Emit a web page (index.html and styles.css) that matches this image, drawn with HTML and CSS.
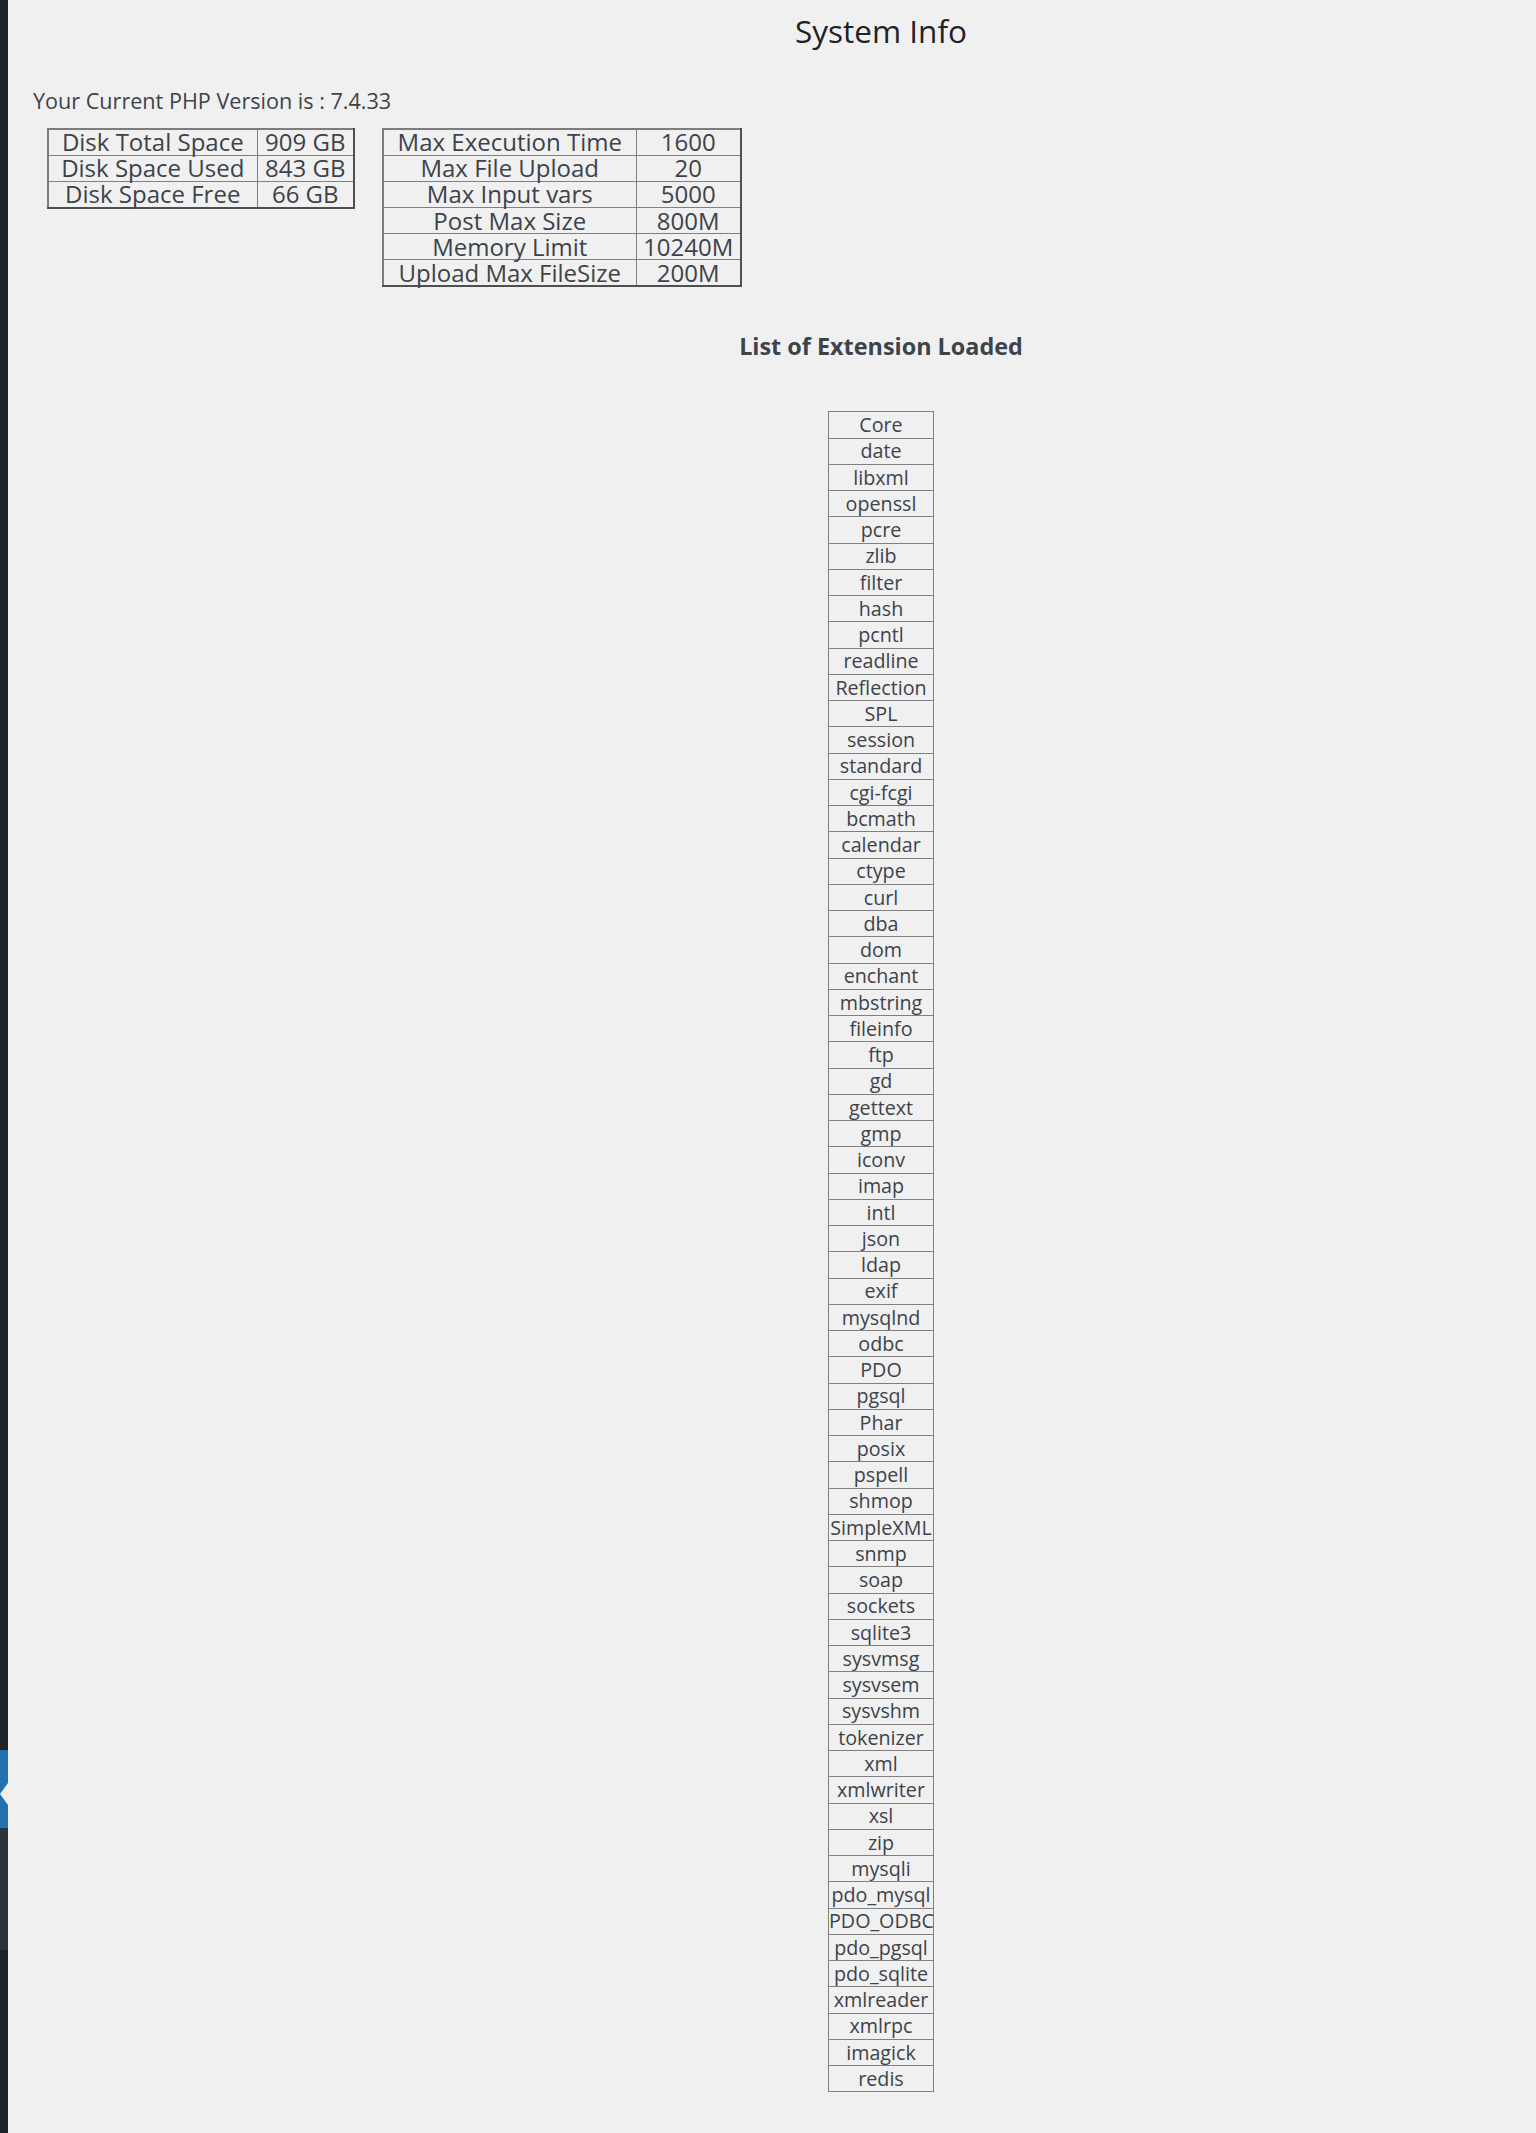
FILE: index.html
```html
<!DOCTYPE html>
<html lang="en">
<head>
<meta charset="utf-8">
<title>System Info</title>
<link rel="stylesheet" href="styles.css">
</head>
<body>
<div class="layout">
  <aside class="adminmenu">
    <div class="seg seg-top"></div>
    <div class="seg seg-current"><span class="current-arrow"></span></div>
    <div class="seg seg-sub"></div>
    <div class="seg seg-rest"></div>
  </aside>
  <main class="content">
    <h1 class="page-title centered">System Info</h1>
    <p class="php-version">Your Current PHP Version is : 7.4.33</p>
    <div class="info-tables">
      <table class="info-table disk-table">
        <colgroup><col class="c-name"><col></colgroup>
        <tr><td>Disk Total Space</td><td>909 GB</td></tr>
        <tr><td>Disk Space Used</td><td>843 GB</td></tr>
        <tr><td>Disk Space Free</td><td>66 GB</td></tr>
      </table>
      <table class="info-table php-table">
        <colgroup><col class="c-name"><col></colgroup>
        <tr><td>Max Execution Time</td><td>1600</td></tr>
        <tr><td>Max File Upload</td><td>20</td></tr>
        <tr><td>Max Input vars</td><td>5000</td></tr>
        <tr><td>Post Max Size</td><td>800M</td></tr>
        <tr><td>Memory Limit</td><td>10240M</td></tr>
        <tr><td>Upload Max FileSize</td><td>200M</td></tr>
      </table>
    </div>
    <h3 class="ext-title centered">List of Extension Loaded</h3>
    <div class="centered ext-wrap">
      <table class="ext-table">
        <tr><td>Core</td></tr>
        <tr><td>date</td></tr>
        <tr><td>libxml</td></tr>
        <tr><td>openssl</td></tr>
        <tr><td>pcre</td></tr>
        <tr><td>zlib</td></tr>
        <tr><td>filter</td></tr>
        <tr><td>hash</td></tr>
        <tr><td>pcntl</td></tr>
        <tr><td>readline</td></tr>
        <tr><td>Reflection</td></tr>
        <tr><td>SPL</td></tr>
        <tr><td>session</td></tr>
        <tr><td>standard</td></tr>
        <tr><td>cgi-fcgi</td></tr>
        <tr><td>bcmath</td></tr>
        <tr><td>calendar</td></tr>
        <tr><td>ctype</td></tr>
        <tr><td>curl</td></tr>
        <tr><td>dba</td></tr>
        <tr><td>dom</td></tr>
        <tr><td>enchant</td></tr>
        <tr><td>mbstring</td></tr>
        <tr><td>fileinfo</td></tr>
        <tr><td>ftp</td></tr>
        <tr><td>gd</td></tr>
        <tr><td>gettext</td></tr>
        <tr><td>gmp</td></tr>
        <tr><td>iconv</td></tr>
        <tr><td>imap</td></tr>
        <tr><td>intl</td></tr>
        <tr><td>json</td></tr>
        <tr><td>ldap</td></tr>
        <tr><td>exif</td></tr>
        <tr><td>mysqlnd</td></tr>
        <tr><td>odbc</td></tr>
        <tr><td>PDO</td></tr>
        <tr><td>pgsql</td></tr>
        <tr><td>Phar</td></tr>
        <tr><td>posix</td></tr>
        <tr><td>pspell</td></tr>
        <tr><td>shmop</td></tr>
        <tr><td>SimpleXML</td></tr>
        <tr><td>snmp</td></tr>
        <tr><td>soap</td></tr>
        <tr><td>sockets</td></tr>
        <tr><td>sqlite3</td></tr>
        <tr><td>sysvmsg</td></tr>
        <tr><td>sysvsem</td></tr>
        <tr><td>sysvshm</td></tr>
        <tr><td>tokenizer</td></tr>
        <tr><td>xml</td></tr>
        <tr><td>xmlwriter</td></tr>
        <tr><td>xsl</td></tr>
        <tr><td>zip</td></tr>
        <tr><td>mysqli</td></tr>
        <tr><td>pdo_mysql</td></tr>
        <tr><td>PDO_ODBC</td></tr>
        <tr><td>pdo_pgsql</td></tr>
        <tr><td>pdo_sqlite</td></tr>
        <tr><td>xmlreader</td></tr>
        <tr><td>xmlrpc</td></tr>
        <tr><td>imagick</td></tr>
        <tr><td>redis</td></tr>
      </table>
    </div>
  </main>
</div>
</body>
</html>
```

FILE: styles.css
```css
html, body {
  margin: 0;
  padding: 0;
  background: #f0f0f1;
}

body {
  font-family: "Open Sans", "Noto Sans", sans-serif;
  color: #3c434a;
}

.layout {
  display: flex;
  min-height: 2133px;
}

/* collapsed admin menu strip */
.adminmenu {
  width: 8px;
  flex: 0 0 8px;
  display: flex;
  flex-direction: column;
}

.seg { width: 100%; }
.seg-top { height: 1750px; background: #1d2327; }
.seg-current {
  height: 78px;
  background: #2271b1;
  position: relative;
}
.seg-sub { height: 122px; background: #2c3338; }
.seg-rest { flex: 1; background: #1d2327; }

.current-arrow {
  position: absolute;
  right: 0;
  top: 33px;
  width: 0;
  height: 0;
  border-top: 11px solid transparent;
  border-bottom: 11px solid transparent;
  border-right: 8px solid #f0f0f1;
}

.content {
  flex: 1;
  padding: 9px 0 0 25px;
}

.centered {
  margin-left: 193px;
  text-align: center;
}

.page-title {
  font-size: 31.5px;
  font-weight: 400;
  line-height: normal;
  color: #1d2327;
  margin-top: 0;
  margin-bottom: 0;
}

.php-version {
  font-size: 21.6px;
  line-height: normal;
  margin: 33.5px 0 0;
}

.info-tables {
  display: flex;
  align-items: flex-start;
  gap: 27px;
  margin: 13.5px 0 0 13.5px;
}

.info-table {
  border-collapse: collapse;
  table-layout: fixed;
  font-size: 24px;
  line-height: 1;
  border-style: solid;
  border-width: 2px;
  border-color: #7d7d7d #4f4f4f #4f4f4f #7d7d7d;
}

.disk-table { width: 308px; }
.disk-table .c-name { width: 210px; }
.php-table { width: 360px; }
.php-table .c-name { width: 254px; }

.info-table tr { height: 26.2px; }

.info-table td {
  border: 1px solid #808080;
  padding: 0;
  text-align: center;
  vertical-align: middle;
  white-space: nowrap;
}

.ext-title {
  font-size: 23.4px;
  font-weight: 700;
  line-height: normal;
  color: #3c434a;
  margin: 43.3px 0 0 193px;
}

.ext-wrap {
  margin-top: 49px;
  display: flex;
  justify-content: center;
}

.ext-table {
  border-collapse: collapse;
  table-layout: fixed;
  width: 106px;
  font-size: 19.7px;
  line-height: 1;
  border: 1px solid #808080;
}

.ext-table tr { height: 26.25px; }

.ext-table td {
  border: 1px solid #808080;
  padding: 0;
  text-align: center;
  vertical-align: middle;
  white-space: nowrap;
  overflow: visible;
}
```
